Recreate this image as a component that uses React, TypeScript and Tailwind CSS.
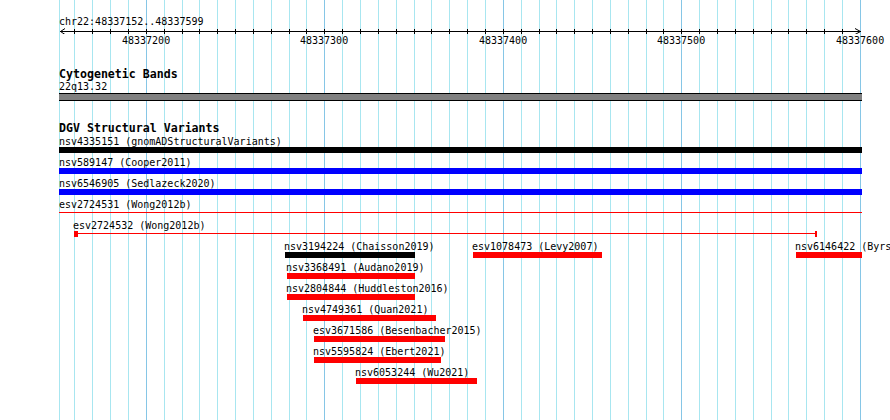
import React from "react";

const X0 = 146;
const STEP = 17.85;
const gx = (n: number) => Math.floor(X0 + n * STEP + 0.3);

const gridLines = [
  { x: 59, major: false },
  ...Array.from({ length: 45 }, (_, i) => {
    const n = i - 4;
    return { x: gx(n), major: n % 10 === 0 };
  }),
];

const ticks = Array.from({ length: 44 }, (_, i) => gx(i - 4));

const tickLabels = [0, 10, 20, 30, 40].map((n) => ({
  x: gx(n),
  text: String(48337200 + n * 10),
}));

type Kind = "bar" | "line" | "span";
type Feat = { label: string; x: number; w: number; color: string; kind?: Kind; shift?: boolean };

const RED = "bg-[#ff0000]";
const BLUE = "bg-[#0000ff]";
const BLACK = "bg-black";

const rows: Feat[][] = [
  [{ label: "nsv4335151 (gnomADStructuralVariants)", x: 59, w: 803, color: BLACK }],
  [{ label: "nsv589147 (Cooper2011)", x: 59, w: 803, color: BLUE }],
  [{ label: "nsv6546905 (Sedlazeck2020)", x: 59, w: 803, color: BLUE }],
  [{ label: "esv2724531 (Wong2012b)", x: 59, w: 803, color: RED, kind: "line" }],
  [{ label: "esv2724532 (Wong2012b)", x: 74, w: 743, color: RED, kind: "span", shift: true }],
  [
    { label: "nsv3194224 (Chaisson2019)", x: 285, w: 130, color: BLACK, shift: true },
    { label: "esv1078473 (Levy2007)", x: 473, w: 129, color: RED, shift: true },
    { label: "nsv6146422 (Byrska-Bishop2022)", x: 796, w: 66, color: RED, shift: true },
  ],
  [{ label: "nsv3368491 (Audano2019)", x: 287, w: 128, color: RED, shift: true }],
  [{ label: "nsv2804844 (Huddleston2016)", x: 287, w: 128, color: RED, shift: true }],
  [{ label: "nsv4749361 (Quan2021)", x: 303, w: 133, color: RED, shift: true }],
  [{ label: "esv3671586 (Besenbacher2015)", x: 314, w: 131, color: RED, shift: true }],
  [{ label: "nsv5595824 (Ebert2021)", x: 314, w: 127, color: RED, shift: true }],
  [{ label: "nsv6053244 (Wu2021)", x: 356, w: 121, color: RED, shift: true }],
];

function Glyph({ f }: { f: Feat }) {
  const kind = f.kind ?? "bar";
  if (kind === "bar") return <div className={`h-[6px] w-full ${f.color}`} />;
  if (kind === "line")
    return (
      <div className="h-[6px] w-full pt-[2px]">
        <div className={`h-px w-full ${f.color}`} />
      </div>
    );
  return (
    <div className="flex h-[6px] w-full items-start">
      <div className={`h-[6px] w-[4px] shrink-0 ${f.color}`} />
      <div className="flex-1 pt-[2px]">
        <div className={`h-px w-full ${f.color}`} />
      </div>
      <div className={`h-[6px] w-[2px] shrink-0 ${f.color}`} />
    </div>
  );
}

function Feature({ f }: { f: Feat }) {
  return (
    <div className="absolute top-0 flex flex-col" style={{ left: f.x, width: f.w }}>
      <div className={`h-[12px] leading-[13px] whitespace-nowrap ${f.shift ? "-ml-px" : ""}`}>{f.label}</div>
      <Glyph f={f} />
    </div>
  );
}

export default function App() {
  return (
    <div className="relative w-[890px] h-[420px] overflow-hidden bg-white text-black font-['DejaVu_Sans_Mono',monospace] text-[10px]">
      {/* grid lines (drawn at genomic coordinates) */}
      <div className="absolute inset-0">
        {gridLines.map((g, i) => (
          <div
            key={i}
            className={`absolute top-0 bottom-0 w-px ${g.major ? "bg-[#86c6e6]" : "bg-[#a8e6f0]"}`}
            style={{ left: g.x }}
          />
        ))}
      </div>

      <div className="relative flex flex-col">
        {/* ruler */}
        <div className="pt-[15px] pl-[59px] h-[28px] leading-[13px]">chr22:48337152..48337599</div>
        <svg width="890" height="6" className="block" shapeRendering="crispEdges">
          <rect x="60" y="3" width="801" height="1" fill="#000" />
          {ticks.map((x, i) => (
            <rect key={i} x={x} y="1" width="1" height="5" fill="#000" />
          ))}
          <path d="M65 0.5 L60.5 3.5 L65 6.5" stroke="#000" fill="none" strokeWidth="1" shapeRendering="auto" />
          <path d="M855 0.5 L860.5 3.5 L855 6.5" stroke="#000" fill="none" strokeWidth="1" shapeRendering="auto" />
        </svg>
        <div className="relative h-[13px] leading-[13px]">
          {tickLabels.map((t) => (
            <div key={t.text} className="absolute top-0 whitespace-nowrap" style={{ left: t.x - 24 }}>
              {t.text}
            </div>
          ))}
        </div>

        {/* Cytogenetic Bands */}
        <div className="mt-[20px] pl-[59px] flex flex-col">
          <div className="h-[13px] leading-[14px] text-[11.6px] font-bold">Cytogenetic Bands</div>
          <div className="h-[13px] leading-[13px]">22q13.32</div>
          <div className="w-[803px] h-[8px] bg-[#808080] border-y border-black" />
        </div>

        {/* DGV Structural Variants */}
        <div className="mt-[20px] flex flex-col">
          <div className="pl-[59px] h-[14px] leading-[14px] text-[11.6px] font-bold">DGV Structural Variants</div>
          <div className="flex flex-col">
            {rows.map((r, i) => (
              <div key={i} className="relative h-[21px]">
                {r.map((f) => (
                  <Feature key={f.label} f={f} />
                ))}
              </div>
            ))}
          </div>
        </div>
      </div>
    </div>
  );
}
